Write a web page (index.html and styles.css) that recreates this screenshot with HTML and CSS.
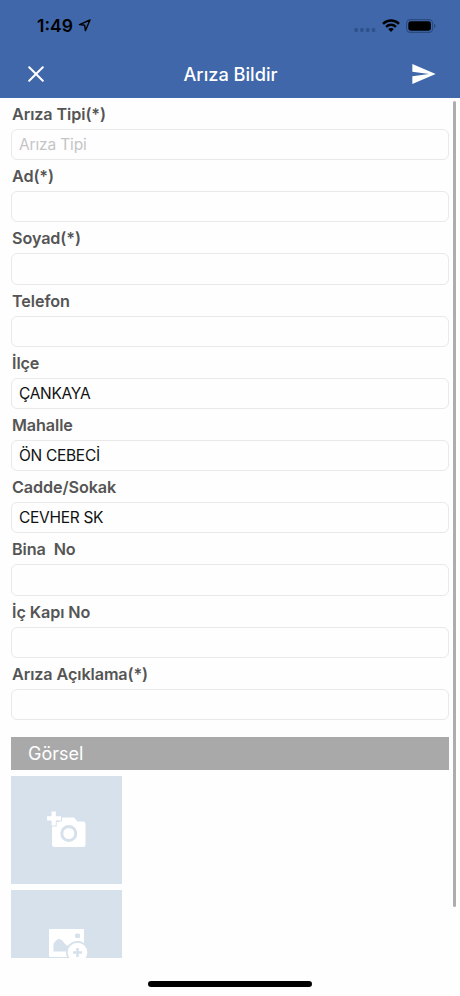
FILE: index.html
```html
<!DOCTYPE html>
<html lang="tr">
<head>
    <meta charset="UTF-8">
    <meta name="viewport" content="width=device-width, initial-scale=1.0">
    <title>Arıza Bildir</title>
    <link rel="stylesheet" href="styles.css">
</head>
<body>

    <header>
        <div class="status-bar">
            <div class="clock">
                <span class="time">1:49</span>
                <svg class="location" viewBox="0 0 13 13"><path d="M12 1 L1.5 5.6 L6.7 6.3 L7.4 11.6 Z" fill="none" stroke="#000" stroke-width="1.4" stroke-linejoin="round"/></svg>
            </div>
            <div class="indicators">
                <svg class="signal" viewBox="0 0 22 4" fill="#2f528c"><rect x="0.5" width="3.4" height="4" rx="1"/><rect x="6.2" width="3.4" height="4" rx="1"/><rect x="12" width="3.4" height="4" rx="1"/><rect x="17.8" width="3.4" height="4" rx="1"/></svg>
                <svg class="wifi" viewBox="0 0 18 13"><g fill="none" stroke="#000" stroke-width="2.4"><path d="M1 4.8 C5.5 0.3 12.5 0.3 17 4.8"/><path d="M4.1 7.8 C6.9 5.1 11.1 5.1 13.9 7.8"/></g><path d="M6.2 10.1 C7.8 8.6 10.2 8.6 11.8 10.1 L9 13 Z"/></svg>
                <svg class="battery" viewBox="0 0 30 14"><rect x="0.6" y="0.6" width="26" height="12.8" rx="3.8" fill="none" stroke="#2b4a7d" stroke-width="1.1"/><rect x="2.3" y="2.3" width="22.6" height="9.4" rx="2.4"/><path d="M28 4.8 C30 5.6 30 8.4 28 9.2 Z" fill="#2b4a7d"/></svg>
            </div>
        </div>
        <div class="navbar">
            <svg class="close" viewBox="0 0 16 16"><path d="M1.2 1.2 L14.8 14.8 M14.8 1.2 L1.2 14.8" stroke="#fff" stroke-width="2" stroke-linecap="round"/></svg>
            <h1>Arıza Bildir</h1>
            <svg class="send" viewBox="2 3 21 18"><path fill="#fff" d="M2.01 21L23 12 2.01 3 2 10l15 2-15 2z"/></svg>
        </div>
    </header>

    <main>
        <form>
            <label for="tip">Arıza Tipi(*)</label>
            <input id="tip" type="text" placeholder="Arıza Tipi">
            <label for="ad">Ad(*)</label>
            <input id="ad" type="text">
            <label for="soyad">Soyad(*)</label>
            <input id="soyad" type="text">
            <label for="telefon">Telefon</label>
            <input id="telefon" type="text">
            <label for="ilce">İlçe</label>
            <input id="ilce" type="text" value="ÇANKAYA">
            <label for="mahalle">Mahalle</label>
            <input id="mahalle" type="text" value="ÖN CEBECİ">
            <label for="cadde">Cadde/Sokak</label>
            <input id="cadde" type="text" value="CEVHER SK">
            <label for="bina">Bina&nbsp; No</label>
            <input id="bina" type="text">
            <label for="kapi">İç Kapı No</label>
            <input id="kapi" type="text">
            <label for="aciklama">Arıza Açıklama(*)</label>
            <input id="aciklama" type="text">
        </form>

        <h2>Görsel</h2>
        <div class="tile">
            <svg class="camera" viewBox="0 0 40 38">
                <path fill="#fff" d="M13 6.5 H27 L30.5 10.5 H36 Q38.5 10.5 38.5 13 V33.5 Q38.5 36 36 36 H7.5 Q5 36 5 33.5 V11 H13 Z"/>
                <circle cx="21.8" cy="22.5" r="7" fill="none" stroke="#d6e1eb" stroke-width="3"/>
                <path d="M6.7 0 V15.5 M-1 7.3 H15" stroke="#d6e1eb" stroke-width="6"/>
                <path d="M6.7 0.5 V14.5 M0 7.3 H14" stroke="#fff" stroke-width="4.2"/>
            </svg>
        </div>
        <div class="tile">
            <svg class="gallery" viewBox="0 0 40 34">
                <rect x="1" y="1" width="35" height="28" rx="1" fill="#fff"/>
                <path fill="#d6e1eb" d="M5.5 23.5 V16 Q8 11 11.5 11 Q14 11.5 17 16 L20 18 L25 14 L34 20 V23.5 Z"/>
                <rect x="27" y="5.5" width="5" height="4.4" rx="1.5" fill="#d6e1eb"/>
                <circle cx="29.5" cy="24.5" r="11.5" fill="#d6e1eb"/>
                <circle cx="29.5" cy="24.5" r="9.8" fill="#fff"/>
                <path d="M29.5 20 V29 M25 24.5 H34" stroke="#d6e1eb" stroke-width="2.6"/>
            </svg>
        </div>
        <div class="scrollbar"></div>
    </main>

    <footer>
        <div class="home-indicator"></div>
    </footer>

</body>
</html>
```
FILE: styles.css
```css
* {
    box-sizing: border-box;
}
body {
    font-family: Inter, 'Liberation Sans', sans-serif;
    margin: 0;
    height: 996px;
    display: flex;
    flex-direction: column;
    background-color: #fefefe;
    overflow: hidden;
}
svg {
    display: block;
}
header {
    height: 98px;
    background-color: #3f67aa;
    flex-shrink: 0;
}
.status-bar {
    height: 49px;
    padding: 2px 24px 0 37px;
    display: flex;
    justify-content: space-between;
    align-items: center;
}
.clock, .indicators {
    display: flex;
    align-items: center;
}
.time {
    font-size: 17.5px;
    font-weight: 600;
    width: 41px;
}
.location {
    width: 13px;
    height: 13px;
}
.signal {
    width: 22px;
    height: 4px;
    margin: 9px 6px 0 0;
}
.wifi {
    width: 18px;
    height: 13px;
    margin-right: 6px;
}
.battery {
    width: 30px;
    height: 14px;
}
.navbar {
    height: 49px;
    padding: 0 24px 0 28px;
    display: flex;
    justify-content: space-between;
    align-items: center;
}
.close {
    width: 16px;
    height: 16px;
}
h1 {
    margin: 0 0 0 5px;
    color: white;
    font-size: 18.2px;
    font-weight: 500;
}
.send {
    width: 24px;
    height: 20px;
}
main {
    position: relative;
    height: 860px;
    padding: 0 11px;
    overflow: hidden;
    flex-shrink: 0;
}
label {
    display: block;
    height: 31px;
    line-height: 32px;
    padding-left: 1px;
    color: #555;
    font-size: 16.2px;
    font-weight: 600;
    letter-spacing: -0.1px;
}
input {
    display: block;
    width: 100%;
    height: 31.2px;
    padding: 0 7px;
    border: 1px solid #e9e9e9;
    border-radius: 6px;
    background-color: #fefefe;
    color: #111;
    font-family: inherit;
    font-size: 15.5px;
    letter-spacing: -0.3px;
}
input::placeholder {
    color: #c5c5c7;
    letter-spacing: -0.15px;
}
h2 {
    margin: 17px 0 6px;
    height: 33px;
    line-height: 34px;
    padding-left: 17px;
    background-color: #a9a9a9;
    color: white;
    font-size: 18px;
    font-weight: 400;
}
.tile {
    width: 111px;
    height: 108px;
    margin-bottom: 6px;
    display: flex;
    justify-content: center;
    align-items: center;
    background-color: #d6e1eb;
}
.camera {
    width: 40px;
    height: 38px;
}
.gallery {
    width: 40px;
    height: 34px;
    margin: 3px 0 0 2px;
}
.scrollbar {
    position: absolute;
    top: 3px;
    right: 4px;
    width: 3px;
    height: 806px;
    border-radius: 2px;
    background-color: #adadad;
}
footer {
    padding-top: 23px;
}
.home-indicator {
    width: 164px;
    height: 6px;
    margin: 0 auto;
    border-radius: 3px;
    background-color: black;
}
```
